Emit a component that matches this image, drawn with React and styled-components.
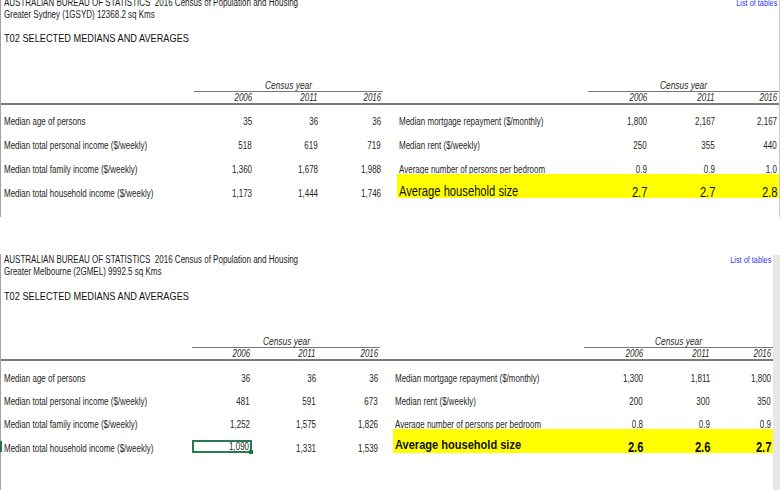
import React from "react";
import styled, { createGlobalStyle, css } from "styled-components";

const GlobalStyle = createGlobalStyle`
  html, body { margin: 0; padding: 0; background: #fff; overflow: hidden; }
  body {
    font-family: "Liberation Sans Narrow", "Arial Narrow", "Liberation Sans", Arial, sans-serif;
    color: #1f1f1f;
  }
`;

const layouts = {
  sydney: {
    width: 780,
    left: [193, 60, 66, 63],
    gap: 14,
    right: [191, 61, 68, 62],
    rows: [21, 24, 24, 24],
    headGap: 10,
    censusTop: 34,
  },
  melbourne: {
    width: 773,
    left: [191, 60, 66, 62],
    gap: 13,
    right: [191, 61, 67, 61],
    rows: [22, 23, 23, 24],
    headGap: 11,
    censusTop: 32,
  },
};

const sydney = {
  place: "Greater Sydney (1GSYD) 12368.2 sq Kms",
  left: [
    ["Median age of persons", "35", "36", "36"],
    ["Median total personal income ($/weekly)", "518", "619", "719"],
    ["Median total family income ($/weekly)", "1,360", "1,678", "1,988"],
    ["Median total household income ($/weekly)", "1,173", "1,444", "1,746"],
  ],
  right: [
    ["Median mortgage repayment ($/monthly)", "1,800", "2,167", "2,167"],
    ["Median rent ($/weekly)", "250", "355", "440"],
    ["Average number of persons per bedroom", "0.9", "0.9", "1.0"],
    ["Average household size", "2.7", "2.7", "2.8"],
  ],
};

const melbourne = {
  place: "Greater Melbourne (2GMEL) 9992.5 sq Kms",
  left: [
    ["Median age of persons", "36", "36", "36"],
    ["Median total personal income ($/weekly)", "481", "591", "673"],
    ["Median total family income ($/weekly)", "1,252", "1,575", "1,826"],
    ["Median total household income ($/weekly)", "1,090", "1,331", "1,539"],
  ],
  right: [
    ["Median mortgage repayment ($/monthly)", "1,300", "1,811", "1,800"],
    ["Median rent ($/weekly)", "200", "300", "350"],
    ["Average number of persons per bedroom", "0.8", "0.9", "0.9"],
    ["Average household size", "2.6", "2.6", "2.7"],
  ],
};

const years = ["2006", "2011", "2016"];

// the sheet was shot zoomed out, so all text looks condensed (Arial Narrow-ish)
const Narrow = styled.span`
  display: inline-block;
  white-space: nowrap;
  transform: scaleX(${(p) => p.$k || 0.8});
  transform-origin: ${(p) => p.$origin || "left"} center;
`;

const Page = styled.main`
  display: flex;
  flex-direction: column;
  width: 780px;
  height: 493px;
  margin-top: -3px;
`;

const Sheet = styled.section`
  width: ${(p) => p.$width}px;
  box-sizing: border-box;
  border-left: 1px solid #a3a3a3;
  padding-bottom: ${(p) => p.$pb || 0}px;
  ${(p) =>
    p.$edge &&
    css`
      border-right: 1px solid #cacaca;
    `}
`;

const Lower = styled.div`
  display: flex;
  flex: 1;
  margin-top: 37px;
`;

const Scrollbar = styled.div`
  flex: 1;
  margin-top: 1px;
  background: #e7e7e7;
`;

const TitleBar = styled.header`
  display: flex;
  justify-content: space-between;
  align-items: flex-start;
  padding: 0 2px 0 3px;
  font-size: 10px;
  line-height: 12px;
  color: #1a1a1a;
`;

const TablesLink = styled.a`
  color: #3434ef;
  text-decoration: underline;
  font-size: 9.5px;
  cursor: pointer;
`;

const Heading = styled.h2`
  margin: ${(p) => p.$gap}px 0 0;
  padding-left: 3px;
  font-size: 11.5px;
  font-weight: normal;
  line-height: 14px;
  color: #111;
`;

const Band = styled.div`
  position: relative;
  display: flex;
  height: ${(p) => p.$h}px;
  box-sizing: border-box;
  margin-top: ${(p) => p.$mt || 0}px;
  ${(p) =>
    p.$rule &&
    css`
      border-bottom: 2px solid #7b7b7b;
    `}
  ${(p) =>
    p.$mark &&
    css`
      &::before {
        content: "";
        position: absolute;
        left: -1px;
        top: 12px;
        width: 2px;
        height: 11px;
        background: #217346;
      }
    `}
`;

const Half = styled.div`
  display: grid;
  grid-template-columns: ${(p) => p.$cols.map((c) => c + "px").join(" ")};
  ${(p) =>
    p.$hot &&
    css`
      background: #ffff00;
    `}
`;

const Gap = styled.div`
  width: ${(p) => p.$w}px;
`;

const Cell = styled.div`
  display: flex;
  align-items: flex-end;
  justify-content: ${(p) => (p.$num ? "flex-end" : "flex-start")};
  padding: ${(p) => (p.$num ? "0 2px 0 0" : `0 0 0 ${p.$indent || 3}px`)};
  font-size: 10px;
  line-height: 9px;
  white-space: nowrap;
  color: #262626;
  ${(p) =>
    p.$big &&
    css`
      font-size: ${p.$bold ? 13 : 14}px;
      font-weight: ${p.$bold ? "bold" : "normal"};
      line-height: ${p.$bold ? 16 : 14}px;
      color: #111;
    `}
  ${(p) =>
    p.$bigNum &&
    css`
      font-size: 14px;
      font-weight: ${p.$bold ? "bold" : "normal"};
      line-height: 11px;
      color: #111;
    `}
  ${(p) =>
    p.$bare &&
    css`
      padding: 0;
    `}
`;

const CensusSpan = styled.div`
  grid-column: 2 / 5;
  border-bottom: 1px solid #777;
  text-align: center;
  font-size: 10.5px;
  font-style: italic;
  line-height: 12px;
  color: #2a2a2a;
`;

const Year = styled.div`
  text-align: right;
  padding-right: 2px;
  font-size: 10px;
  font-style: italic;
  line-height: 11px;
  color: #2a2a2a;
`;

const Selected = styled.span`
  position: relative;
  display: block;
  width: calc(100% + 1px);
  height: 13px;
  box-sizing: border-box;
  border: 2px solid #2a7a50;
  padding-right: 1px;
  text-align: right;
  line-height: 9px;

  &::after {
    content: "";
    position: absolute;
    right: -3px;
    bottom: -3px;
    width: 4px;
    height: 4px;
    background: #217346;
  }
`;

function HeaderRows({ layout }) {
  const sides = [layout.left, layout.right];
  return (
    <>
      <Band $h={13} $mt={layout.censusTop}>
        {sides.map((cols, s) => (
          <React.Fragment key={s}>
            {s === 1 && <Gap $w={layout.gap} />}
            <Half $cols={cols}>
              <div />
              <CensusSpan>
                <Narrow $origin="center">Census year</Narrow>
              </CensusSpan>
            </Half>
          </React.Fragment>
        ))}
      </Band>
      <Band $h={13} $rule>
        {sides.map((cols, s) => (
          <React.Fragment key={s}>
            {s === 1 && <Gap $w={layout.gap} />}
            <Half $cols={cols}>
              <div />
              {years.map((y) => (
                <Year key={y}>
                  <Narrow $origin="right">{y}</Narrow>
                </Year>
              ))}
            </Half>
          </React.Fragment>
        ))}
      </Band>
    </>
  );
}

function Table({ data, layout, bold, selected }) {
  return (
    <>
      <TitleBar>
        <div>
          <div>
            <Narrow>
              AUSTRALIAN BUREAU OF STATISTICS&nbsp; 2016 Census of Population and Housing
            </Narrow>
          </div>
          <div>
            <Narrow>{data.place}</Narrow>
          </div>
        </div>
        <TablesLink>
          <Narrow $k={0.77} $origin="right">
            List of tables
          </Narrow>
        </TablesLink>
      </TitleBar>
      <Heading $gap={layout.headGap}>
        <Narrow>T02 SELECTED MEDIANS AND AVERAGES</Narrow>
      </Heading>
      <HeaderRows layout={layout} />
      {data.left.map((row, i) => {
        const hot = i === 3;
        const right = data.right[i];
        const isSel = selected && i === 3;
        return (
          <Band key={row[0]} $h={layout.rows[i]} $mark={isSel}>
            <Half $cols={layout.left}>
              <Cell>
                <Narrow>{row[0]}</Narrow>
              </Cell>
              {row.slice(1).map((v, j) =>
                isSel && j === 0 ? (
                  <Cell key={j} $num $bare>
                    <Selected>
                      <Narrow $origin="right">{v}</Narrow>
                    </Selected>
                  </Cell>
                ) : (
                  <Cell key={j} $num>
                    <Narrow $origin="right">{v}</Narrow>
                  </Cell>
                )
              )}
            </Half>
            <Gap $w={layout.gap} />
            <Half $cols={layout.right} $hot={hot}>
              <Cell $indent={2} $big={hot} $bold={bold}>
                <Narrow $k={hot && bold ? 0.85 : 0.8}>{right[0]}</Narrow>
              </Cell>
              {right.slice(1).map((v, j) => (
                <Cell key={j} $num $bigNum={hot} $bold={bold}>
                  <Narrow $origin="right">{v}</Narrow>
                </Cell>
              ))}
            </Half>
          </Band>
        );
      })}
    </>
  );
}

export default function App() {
  return (
    <Page>
      <GlobalStyle />
      <Sheet $width={layouts.sydney.width} $edge $pb={19}>
        <Table data={sydney} layout={layouts.sydney} />
      </Sheet>
      <Lower>
        <Sheet $width={layouts.melbourne.width}>
          <Table data={melbourne} layout={layouts.melbourne} bold selected />
        </Sheet>
        <Scrollbar />
      </Lower>
    </Page>
  );
}
